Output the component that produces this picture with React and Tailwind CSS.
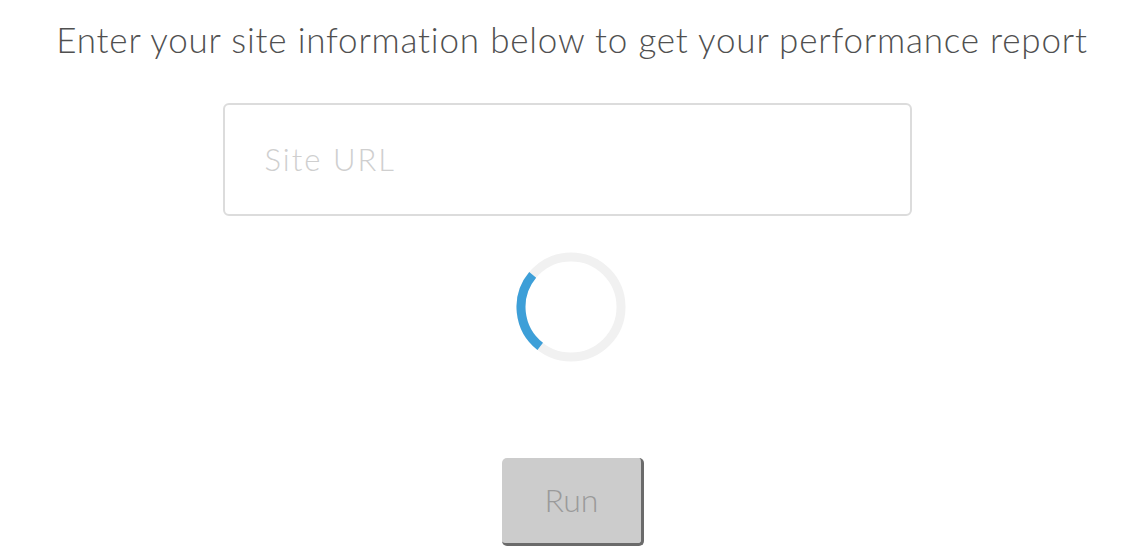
export default function App() {
  return (
    <div className="w-[1142px] h-[558px] bg-white flex flex-col items-center overflow-hidden" style={{ fontFamily: 'Lato, "Open Sans", sans-serif' }}>
      <h1 className="mt-[16px] ml-[2px] text-[35px] leading-[46px] text-[#505050] font-light tracking-[0.8px] whitespace-nowrap">
        Enter your site information below to get your performance report
      </h1>
      <div className="mt-[41px] w-[689px] h-[113px] ml-[-8px] border-2 border-[#dcdcdc] rounded-[6px] flex items-center pl-[40px]">
        <input
          className="w-full outline-none text-[31px] tracking-[2px] text-[#333] placeholder:text-[#cfcfcf] bg-transparent font-light"
          placeholder="Site URL"
        />
      </div>
      <svg className="mt-[35px]" width="112" height="112" viewBox="0 0 112 112">
        <circle cx="56" cy="56" r="50" fill="none" stroke="#f1f1f1" strokeWidth="9" />
        <path
          d={`M ${56 + 50 * Math.cos((140 * Math.PI) / 180)} ${56 - 50 * Math.sin((140 * Math.PI) / 180)} A 50 50 0 0 0 ${56 + 50 * Math.cos((232 * Math.PI) / 180)} ${56 - 50 * Math.sin((232 * Math.PI) / 180)}`}
          fill="none"
          stroke="#3d9fd8"
          strokeWidth="9"
        />
      </svg>
      <button className="mt-[95px] ml-[4px] w-[142px] h-[88px] bg-[#cccccc] rounded-[5px] border-r-[3px] border-b-[3px] border-[#6b6b6b] text-[32px] text-[#9a9a9a] font-light flex items-center justify-center pb-[2px]">
        Run
      </button>
    </div>
  );
}
